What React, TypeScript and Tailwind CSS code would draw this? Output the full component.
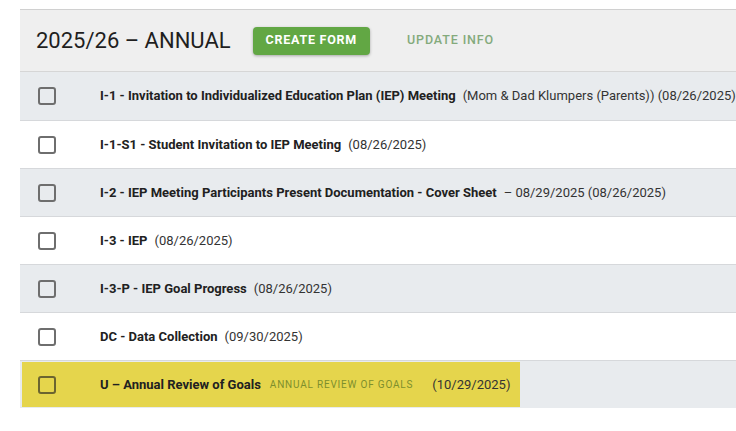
import React from 'react';

type Row = {
  code: string;
  note?: string;
  tag?: string;
  highlight?: boolean;
};

const rows: Row[] = [
  {
    code: 'I-1 - Invitation to Individualized Education Plan (IEP) Meeting',
    note: '(Mom & Dad Klumpers (Parents)) (08/26/2025)',
  },
  { code: 'I-1-S1 - Student Invitation to IEP Meeting', note: '(08/26/2025)' },
  {
    code: 'I-2 - IEP Meeting Participants Present Documentation - Cover Sheet',
    note: '\u2013 08/29/2025 (08/26/2025)',
  },
  { code: 'I-3 - IEP', note: '(08/26/2025)' },
  { code: 'I-3-P - IEP Goal Progress', note: '(08/26/2025)' },
  { code: 'DC - Data Collection', note: '(09/30/2025)' },
  {
    code: 'U \u2013 Annual Review of Goals',
    tag: 'ANNUAL REVIEW OF GOALS',
    note: '(10/29/2025)',
    highlight: true,
  },
];

function Checkbox({ dark }: { dark?: boolean }) {
  return (
    <span
      className={`block h-[18px] w-[18px] rounded-[3px] border-2 ${
        dark ? 'border-[#6b6430]' : 'border-[#6e6e6e]'
      }`}
    />
  );
}

function RowContent({ row }: { row: Row }) {
  return (
    <>
      <div
        className={`flex shrink-0 justify-start ${
          row.highlight ? 'w-[78px] pl-[16px]' : 'w-[80px] pl-[18px]'
        }`}
      >
        <Checkbox dark={row.highlight} />
      </div>
      <span className="font-bold text-[#212121]">{row.code}</span>
      {row.tag && (
        <span className="ml-[9px] text-[10px] tracking-[0.08em] text-[#7d8f2c]">
          {row.tag}
        </span>
      )}
      {row.note && (
        <span className={`${row.tag ? 'ml-[19px]' : 'ml-[7px]'} text-[#333]`}>
          {row.note}
        </span>
      )}
    </>
  );
}

export default function App() {
  return (
    <div
      className="min-h-screen bg-white pl-[20px] pt-[9px]"
      style={{ fontFamily: 'Roboto, "Liberation Sans", sans-serif' }}
    >
      <div className="w-[740px] border-t border-[#d0d0d0]">
        <div className="flex h-[62px] items-center border-b border-[#d6d6d6] bg-[#efefef] pl-[16px]">
          <h1 className="text-[22px] text-[#1f1f1f]">2025/26 &ndash; ANNUAL</h1>
          <button
            type="button"
            className="ml-[22px] h-[28px] rounded-[4px] bg-[#62a744] px-[13px] text-[12.5px] font-bold tracking-[0.06em] text-white shadow-[0_1px_3px_rgba(0,0,0,0.3)]"
          >
            CREATE FORM
          </button>
          <button
            type="button"
            className="ml-[37px] text-[12.5px] font-medium tracking-[0.07em] text-[#84aa7c]"
          >
            UPDATE INFO
          </button>
        </div>

        {rows.map((row, i) => (
          <div
            key={row.code}
            className={`h-[48px] text-[13px] ${i > 0 ? 'border-t border-[#d6d8db]' : ''} ${
              i % 2 === 0 ? 'bg-[#e8ebee]' : 'bg-white'
            } ${row.highlight ? 'px-[2px] py-[1px]' : ''}`}
          >
            {row.highlight ? (
              <div className="flex h-full w-[498px] items-center bg-[#e5d54c]">
                <RowContent row={row} />
              </div>
            ) : (
              <div className="flex h-full items-center">
                <RowContent row={row} />
              </div>
            )}
          </div>
        ))}
      </div>
    </div>
  );
}
